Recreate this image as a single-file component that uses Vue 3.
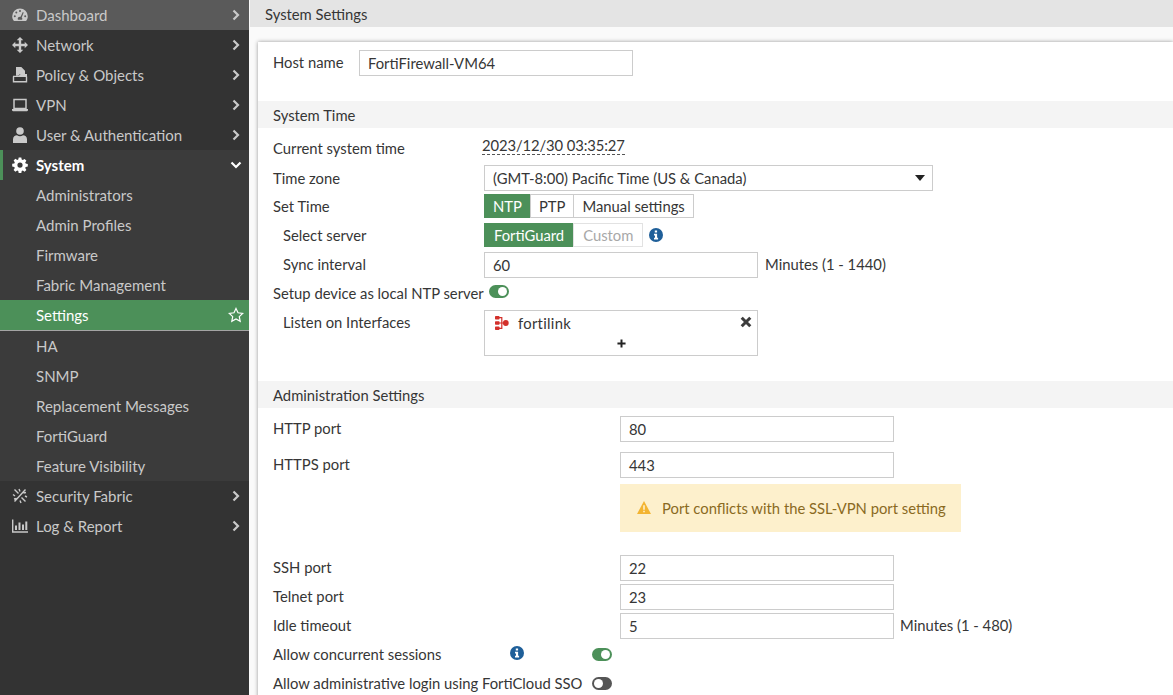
<script setup>
const topItems = [
  { label: 'Dashboard', icon: 'gauge', hover: true },
  { label: 'Network', icon: 'move' },
  { label: 'Policy & Objects', icon: 'policy' },
  { label: 'VPN', icon: 'laptop' },
  { label: 'User & Authentication', icon: 'user' }
]
const subItems = ['Administrators', 'Admin Profiles', 'Firmware', 'Fabric Management', 'Settings', 'HA', 'SNMP', 'Replacement Messages', 'FortiGuard', 'Feature Visibility']
const bottomItems = [
  { label: 'Security Fabric', icon: 'fabric' },
  { label: 'Log & Report', icon: 'log' }
]
</script>

<template>
  <div class="page">
    <aside class="sidebar">
      <div v-for="item in topItems" :key="item.label" :class="['nav-item', { 'is-hover': item.hover }]">
        <svg class="nav-icon" viewBox="0 0 16 16">
          <g v-if="item.icon === 'gauge'">
            <path fill-rule="evenodd" d="M8 1.500a7.800 7.800 0 0 0-7.800 7.800c0 1.600.5 3.100 1.300 4.300.2.300.4.400.7.400h11.600c.3 0 .5-.1.7-.4.8-1.200 1.300-2.700 1.300-4.300A7.800 7.800 0 0 0 8 1.500zM8 3a1 1 0 1 1 0 2 1 1 0 0 1 0-2zM4.300 4.500a1 1 0 1 1 0 2 1 1 0 0 1 0-2zM2.800 8.200a1 1 0 1 1 0 2 1 1 0 0 1 0-2zm10.400 0a1 1 0 1 1 0 2 1 1 0 0 1 0-2zM10.800 5l.9.4-2 5.100c.4.400.6.800.6 1.300 0 .4-.1.700-.3 1H6c-.2-.3-.3-.6-.3-1 0-1.200 1-2 2.200-2h.7z" />
          </g>
          <path v-else-if="item.icon === 'move'" d="M8 0l3.300 3.300H9.200v3.500h3.500V4.700L16 8l-3.300 3.300V9.200H9.200v3.500h2.100L8 16l-3.300-3.300h2.100V9.200H3.300v2.100L0 8l3.300-3.300v2.100h3.500V3.300H4.700z" />
          <g v-else-if="item.icon === 'policy'">
            <path d="M4 0h5.300L13 3.700V7H8L6.300 8.700H4z" />
            <path fill="none" stroke="currentColor" stroke-width="1.400" d="M1.500 9.500v5.200h13V9.500" />
            <path d="M1 8.700h5.800L8.500 7H15v3H1z" />
          </g>
          <g v-else-if="item.icon === 'laptop'">
            <path fill="none" stroke="currentColor" stroke-width="1.500" d="M2 2.500h12v9H2z" />
            <path d="M0 12h16v1.500l-1 .7H1l-1-.7z" />
          </g>
          <g v-else-if="item.icon === 'user'">
            <circle cx="8" cy="4" r="3.800" />
            <path d="M1 16v-3.800C1 9.800 3 8.300 5 8.300c.9.600 1.900.9 3 .9s2.100-.3 3-.9c2 0 4 1.500 4 3.900V16z" />
          </g>
        </svg>
        <span class="nav-label">{{ item.label }}</span>
        <svg class="chevron" viewBox="0 0 8 12"><path fill="none" stroke="currentColor" stroke-width="2.200" d="M1.500 1.500L6 6l-4.500 4.500" /></svg>
      </div>

      <div class="nav-group">
        <div class="nav-item is-open">
          <svg class="nav-icon" viewBox="0 0 16 16">
            <path fill-rule="evenodd" d="M6.700.5h2.600l.4 2.100 1.100.5 1.800-1.200 1.800 1.800-1.200 1.800.5 1.100 2.100.4v2.600l-2.100.4-.5 1.100 1.200 1.800-1.800 1.800-1.800-1.200-1.100.5-.4 2.100H6.700l-.4-2.100-1.100-.5-1.800 1.200-1.800-1.800 1.200-1.800-.5-1.100-2.100-.4V6.800l2.100-.4.5-1.100-1.200-1.800 1.800-1.800 1.800 1.200 1.100-.5zM8 5.500a2.600 2.600 0 1 0 0 5.200 2.600 2.600 0 0 0 0-5.200z" />
          </svg>
          <span class="nav-label">System</span>
          <svg class="chevron-down" viewBox="0 0 12 8"><path fill="none" stroke="currentColor" stroke-width="2.200" d="M1.500 1.500L6 6l4.500-4.500" /></svg>
        </div>
        <div v-for="sub in subItems" :key="sub" :class="['sub-item', { 'is-active': sub === 'Settings' }]">
          <span>{{ sub }}</span>
          <svg v-if="sub === 'Settings'" class="star" viewBox="0 0 16 16"><path fill="none" stroke="currentColor" stroke-width="1.200" d="M8 1.500l2 4.300 4.700.6-3.400 3.200.9 4.700L8 12l-4.200 2.300.9-4.700L1.300 6.400 6 5.800z" /></svg>
        </div>
      </div>

      <div v-for="item in bottomItems" :key="item.label" class="nav-item">
        <svg class="nav-icon" viewBox="0 0 16 16">
          <g v-if="item.icon === 'fabric'" fill="none" stroke="currentColor" stroke-width="1.400">
            <path d="M2.500 1.500l4 4M9.500 9.500l4 4M13.500 1.500L2.500 13.500M7 1l1 2.500M8 12.500L9 15M1 6.500l2 1.500M13 8l2 1M11.500 5l2.500-.5M2 11l2.500-.5" />
          </g>
          <g v-else>
            <path d="M0 1.500h1.400v11.800H16v1.400H0z" />
            <path d="M3 7.500h2v4.500H3zM6.500 4.500h2V12h-2zM10 6.500h2V12h-2zM13.300 3.500h2V12h-2z" />
          </g>
        </svg>
        <span class="nav-label">{{ item.label }}</span>
        <svg class="chevron" viewBox="0 0 8 12"><path fill="none" stroke="currentColor" stroke-width="2.200" d="M1.500 1.500L6 6l-4.500 4.500" /></svg>
      </div>
    </aside>

    <main class="main">
      <div class="title-bar">System Settings</div>
      <div class="card">
        <div class="row">
          <label class="host-label">Host name</label>
          <div class="input">FortiFirewall-VM64</div>
        </div>

        <div class="section-head">System Time</div>

        <div class="row time-row">
          <label class="label">Current system time</label>
          <span class="clock">2023/12/30 03:35:27</span>
        </div>
        <div class="row tz-row">
          <label class="label">Time zone</label>
          <div class="select">
            <span>(GMT-8:00) Pacific Time (US &amp; Canada)</span>
            <i class="caret"></i>
          </div>
        </div>
        <div class="row settime-row">
          <label class="label">Set Time</label>
          <div class="btn-group">
            <span class="seg is-on">NTP</span>
            <span class="seg">PTP</span>
            <span class="seg">Manual settings</span>
          </div>
        </div>
        <div class="row server-row">
          <label class="label indent">Select server</label>
          <div class="btn-group">
            <span class="seg is-on">FortiGuard</span>
            <span class="seg is-disabled">Custom</span>
          </div>
          <svg class="info server-info" viewBox="0 0 14 14">
            <circle cx="7" cy="7" r="7" fill="#1f5f99" />
            <path fill="#fff" d="M5.800 2.500h2.300v2H5.800zM5 5.700h3.100v4.100h1v1.700H5V9.800h1V7.400H5z" />
          </svg>
        </div>
        <div class="row sync-row">
          <label class="label indent">Sync interval</label>
          <div class="input">60</div>
          <span class="hint">Minutes (1 - 1440)</span>
        </div>
        <div class="row ntp-row">
          <label class="ntp-label">Setup device as local NTP server</label>
          <span class="toggle is-on ntp-toggle"></span>
        </div>
        <div class="row iface-row">
          <label class="label indent iface-label">Listen on Interfaces</label>
          <div class="iface-box">
            <div class="iface-entry">
              <svg class="iface-icon" viewBox="0 0 14 14">
                <g fill="#d3302b">
                  <circle cx="10.800" cy="7" r="2.900" />
                  <rect x="0" y="0" width="4.500" height="3.400" rx=".7" />
                  <rect x="0" y="5.300" width="4.500" height="3.400" rx=".7" />
                  <rect x="0" y="10.600" width="4.500" height="3.400" rx=".7" />
                  <path d="M4 1.100h3.400v11.800H4v-1.200h2.200V7.600H4V6.400h2.200V2.300H4zM6.500 6.400h2.500v1.200H6.500z" />
                </g>
              </svg>
              <span>fortilink</span>
              <svg class="iface-x" viewBox="0 0 12 12"><path fill="none" stroke="#3c3c3c" stroke-width="3" d="M1.700 1.700l8.600 8.600M10.300 1.700l-8.600 8.600" /></svg>
            </div>
            <svg class="iface-plus" viewBox="0 0 10 10"><path fill="none" stroke="#222" stroke-width="2.200" d="M5 .5v9M.5 5h9" /></svg>
          </div>
        </div>

        <div class="section-head admin-head">Administration Settings</div>

        <div class="row http-row">
          <label class="label wide">HTTP port</label>
          <div class="input">80</div>
        </div>
        <div class="row https-row">
          <label class="label wide">HTTPS port</label>
          <div class="input">443</div>
        </div>
        <div class="warning">
          <svg class="warn-icon" viewBox="0 0 14 13">
            <path fill="#f3b431" d="M7 0l7 13H0z" />
            <path fill="#fdf0cc" d="M6.200 4.300h1.600v4.500H6.200zM6.200 9.700h1.600v1.600H6.200z" />
          </svg>
          <span>Port conflicts with the SSL-VPN port setting</span>
        </div>
        <div class="row ssh-row">
          <label class="label wide">SSH port</label>
          <div class="input">22</div>
        </div>
        <div class="row tight-row">
          <label class="label wide">Telnet port</label>
          <div class="input">23</div>
        </div>
        <div class="row tight-row">
          <label class="label wide">Idle timeout</label>
          <div class="input">5</div>
          <span class="hint">Minutes (1 - 480)</span>
        </div>
        <div class="row switch-row">
          <label class="concurrent-label">Allow concurrent sessions</label>
          <svg class="info concurrent-info" viewBox="0 0 14 14">
            <circle cx="7" cy="7" r="7" fill="#1f5f99" />
            <path fill="#fff" d="M5.800 2.500h2.300v2H5.800zM5 5.700h3.100v4.100h1v1.700H5V9.800h1V7.400H5z" />
          </svg>
          <span class="toggle is-on"></span>
        </div>
        <div class="row switch-row sso-row">
          <label class="sso-label">Allow administrative login using FortiCloud SSO</label>
          <span class="toggle"></span>
        </div>
      </div>
    </main>
  </div>
</template>

<style>
html, body {
  margin: 0;
  height: 100%;
  overflow: hidden;
}
</style>

<style scoped>
.page {
  display: flex;
  width: 1173px;
  height: 695px;
  overflow: hidden;
  font-family: Lato, "Open Sans", sans-serif;
  font-size: 15px;
  color: #363636;
  background: #fafafa;
}

/* sidebar */
.sidebar {
  width: 249px;
  flex: none;
  margin-right: 1px;
  background: #333;
  color: #c9c9c9;
}
.nav-item {
  display: flex;
  align-items: center;
  height: 30px;
  padding-left: 12px;
  position: relative;
}
.nav-item.is-hover {
  background: #5a5a5a;
}
.nav-item.is-open {
  border-left: 3px solid #4c9059;
  padding-left: 9px;
  color: #fff;
  font-weight: 700;
}
.nav-icon {
  width: 16px;
  height: 16px;
  fill: currentColor;
  flex: none;
  margin-right: 8px;
}
.nav-label {
  flex: 1;
}
.chevron {
  width: 8px;
  height: 12px;
  margin-right: 9px;
}
.chevron-down {
  width: 12px;
  height: 8px;
  margin-right: 7px;
}
.nav-group {
  background: #3b3b3b;
}
.sub-item {
  display: flex;
  align-items: center;
  justify-content: space-between;
  height: 30px;
  padding: 0 5px 0 36px;
}
.sub-item.is-active {
  height: 30px;
  background: #4c9059;
  border-bottom: 1px solid #a4a4a4;
  color: #fff;
  box-sizing: content-box;
}
.star {
  width: 16px;
  height: 16px;
}

/* main column */
.main {
  flex: 1;
  min-width: 0;
  font-size: 14.8px;
}
.title-bar {
  height: 27px;
  line-height: 29px;
  padding-left: 15px;
  background: #e4e4e4;
  color: #363636;
}
.card {
  box-sizing: border-box;
  margin: 15px 0 0 8px;
  padding-top: 8px;
  height: 660px;
  background: #fff;
  box-shadow: 0 0 4px rgba(0, 0, 0, 0.4);
}
.row {
  display: flex;
  align-items: center;
  padding-left: 15px;
}
.label {
  width: 211px;
  flex: none;
}
.label.indent {
  padding-left: 10px;
  width: 201px;
}
.label.wide {
  width: 347px;
  margin-top: -2px;
}
.input {
  box-sizing: border-box;
  width: 274px;
  height: 26px;
  line-height: 24px;
  padding-left: 8px;
  border: 1px solid #ccc;
  background: #fff;
  flex: none;
}
.hint {
  margin-left: 7px;
  margin-top: -2px;
}
.tight-row .hint {
  margin-left: 6px;
}
.host-label {
  width: 86px;
  flex: none;
  margin-top: -2px;
}
.section-head {
  height: 27px;
  line-height: 29px;
  padding-left: 15px;
  margin-top: 25px;
  background: #f4f4f4;
}
.time-row {
  margin-top: 8px;
  height: 24px;
}
.time-row .label {
  width: 209px;
  margin-top: -1px;
}
.clock {
  border-bottom: 1px dashed #555;
  line-height: 18px;
  margin-top: -5px;
  letter-spacing: -0.1px;
}
.tz-row {
  margin-top: 5px;
}
.tz-row .label {
  margin-top: -1px;
}
.select {
  box-sizing: border-box;
  display: flex;
  align-items: center;
  justify-content: space-between;
  width: 449px;
  height: 26px;
  padding: 0 6px 0 8px;
  border: 1px solid #ccc;
}
.caret {
  width: 0;
  height: 0;
  border-left: 5px solid transparent;
  border-right: 5px solid transparent;
  border-top: 6px solid #222;
  margin-right: 1px;
}
.settime-row {
  margin-top: 3px;
}
.btn-group {
  display: flex;
}
.seg {
  box-sizing: border-box;
  height: 24px;
  line-height: 22px;
  padding: 0 8px;
  border: 1px solid #ccc;
  margin-left: -1px;
}
.seg:first-child {
  margin-left: 0;
}
.seg.is-on {
  background: #4c9059;
  border-color: #4c9059;
  color: #fff;
}
.seg.is-disabled {
  color: #a8a8a8;
  border-color: #e2e2e2;
}
.server-row {
  margin-top: 5px;
}
.server-row .seg {
  padding: 0 9px;
}
.info {
  width: 14px;
  height: 14px;
  flex: none;
}
.server-info {
  margin-left: 6px;
  margin-top: -1px;
}
.sync-row {
  margin-top: 5px;
}
.sync-row .label {
  margin-top: -2px;
}
.ntp-row {
  margin-top: 5px;
  height: 21px;
}
.ntp-label {
  margin-top: -1px;
}
.toggle {
  position: relative;
  width: 20px;
  height: 13px;
  border-radius: 7px;
  background: #555;
  flex: none;
}
.toggle::after {
  content: "";
  position: absolute;
  top: 2px;
  left: 2px;
  width: 9px;
  height: 9px;
  border-radius: 50%;
  background: #fff;
}
.toggle.is-on {
  background: #4c9059;
}
.toggle.is-on::after {
  left: 9px;
}
.ntp-toggle {
  margin: -5px 0 0 5px;
}
.iface-row {
  margin-top: 6px;
  align-items: flex-start;
}
.iface-label {
  padding-top: 3px;
}
.iface-box {
  box-sizing: border-box;
  width: 274px;
  height: 46px;
  border: 1px solid #ccc;
  display: flex;
  flex-direction: column;
  align-items: center;
}
.iface-entry {
  display: flex;
  align-items: center;
  align-self: stretch;
  height: 24px;
  padding: 0 5px 0 10px;
}
.iface-entry span {
  flex: 1;
  letter-spacing: 0.3px;
}
.iface-icon {
  width: 14px;
  height: 14px;
  margin-right: 9px;
}
.iface-x {
  width: 12px;
  height: 12px;
  margin-top: -3px;
}
.iface-plus {
  width: 9px;
  height: 9px;
  margin-top: 4px;
}
.admin-head {
  margin-top: 25px;
}
.http-row {
  margin-top: 8px;
}
.https-row {
  margin-top: 10px;
}
.warning {
  display: flex;
  align-items: center;
  box-sizing: border-box;
  width: 341px;
  height: 48px;
  margin: 6px 0 0 362px;
  padding-left: 17px;
  background: #fdf0cc;
  color: #8a6a1f;
}
.warn-icon {
  width: 14px;
  height: 13px;
  margin-right: 11px;
  margin-top: -1px;
}
.ssh-row {
  margin-top: 23px;
}
.tight-row {
  margin-top: 3px;
}
.switch-row {
  height: 29px;
  margin-top: 1px;
}
.switch-row label {
  margin-top: -2px;
}
.concurrent-label {
  width: 237px;
  flex: none;
}
.concurrent-info {
  margin-top: -3px;
}
.concurrent-info + .toggle {
  margin-left: 68px;
}
.sso-row {
  margin-top: 0;
}
.sso-label {
  width: 319px;
  flex: none;
}
</style>
